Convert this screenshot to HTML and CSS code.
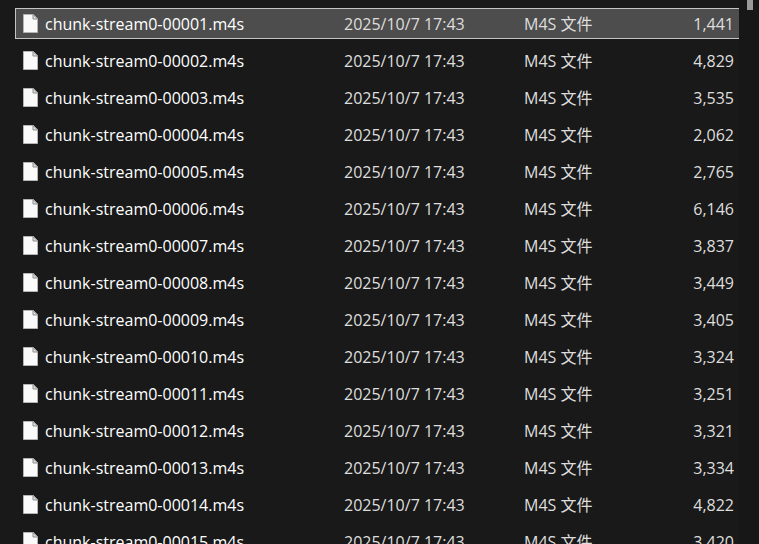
FILE: index.html
```
<!DOCTYPE html>
<html lang="zh-CN">
<head>
  <meta charset="UTF-8">
  <meta name="viewport" content="width=device-width, initial-scale=1.0">
  <title>M4S 文件</title>
  <link rel="stylesheet" href="styles.css">
</head>
<body>
  <div class="explorer">
    <div class="file-list">
      <table class="files">
        <colgroup>
          <col>
          <col class="col-date">
          <col class="col-type">
          <col class="col-size">
        </colgroup>
        <tbody id="fileRows"></tbody>
      </table>
    </div>
    <div class="scrollbar">
      <div class="scrollbar-thumb"></div>
    </div>
  </div>

  <script src="script.js"></script>
</body>
</html>
```
FILE: styles.css
```
body {
  margin: 0;
  font-family: "Open Sans", "Noto Sans CJK SC", sans-serif;
  font-size: 16px;
  line-height: 21px;
  background-color: #191919;
  color: #dedede;
}

.explorer {
  display: flex;
  height: 100vh;
  overflow: hidden;
}

.file-list {
  flex: 1;
  padding: 2px 0 0 15px;
  overflow: hidden;
}

.files {
  width: 100%;
  table-layout: fixed;
  border-collapse: separate;
  border-spacing: 0 6px;
}

.col-date {
  width: 180px;
}

.col-type {
  width: 120px;
}

.col-size {
  width: 101px;
}

.files td {
  height: 27px;
  padding: 2px 5px 0 6px;
  border: 1px solid transparent;
  border-width: 1px 0;
  white-space: nowrap;
}

.files .name {
  padding-left: 7px;
  border-left-width: 1px;
  color: #fff;
}

.files .size {
  text-align: right;
}

.files .selected td {
  background-color: #4d4d4d;
  border-color: #c4c4c4;
}

.name-cell {
  display: flex;
  align-items: center;
  gap: 7px;
}

.file-icon {
  width: 15px;
  height: 21px;
}

/* Scrollbar */
.scrollbar {
  width: 20px;
  background-color: #171717;
}

.scrollbar-thumb {
  width: 6px;
  height: 10px;
  margin: 0 6px 0 auto;
  background-color: #9a9a9a;
}
```
FILE: script.js
```
const date = "2025/10/7 17:43";
const sizes = [
  "1,441", "4,829", "3,535", "2,062", "2,765",
  "6,146", "3,837", "3,449", "3,405", "3,324",
  "3,251", "3,321", "3,334", "4,822", "3,420"
];

const icon = `
  <svg class="file-icon" viewBox="0 0 15 21" aria-hidden="true">
    <path d="M0.5 0.5H10.5L14.5 4.5V18.5H0.5Z" fill="#fafafa" stroke="#b4b4b4"/>
    <path d="M10 0.5V5H14.5Z" fill="#e4e4e4" stroke="#8c8c8c"/>
  </svg>`;

// One row per chunk, the first one is selected
document.getElementById("fileRows").innerHTML = sizes.map((size, index) => {
  const number = String(index + 1).padStart(5, "0");
  return `
    <tr${index === 0 ? ' class="selected"' : ""}>
      <td class="name"><div class="name-cell">${icon}<span>chunk-stream0-${number}.m4s</span></div></td>
      <td>${date}</td>
      <td>M4S 文件</td>
      <td class="size">${size}</td>
    </tr>`;
}).join("");
```
